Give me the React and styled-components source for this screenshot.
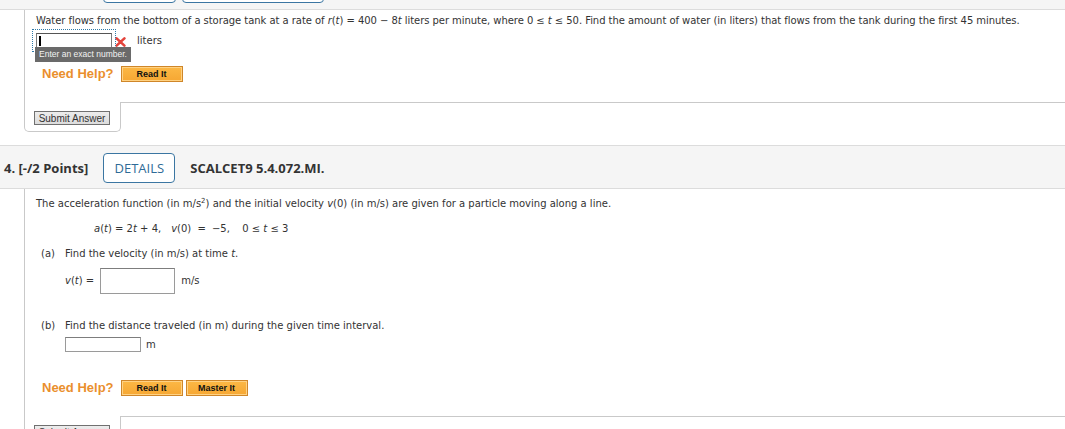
import React from "react"
import styled, { createGlobalStyle } from "styled-components"

const GlobalStyle = createGlobalStyle`
  html, body {
    margin: 0;
    padding: 0;
    background: #fff;
  }
  body {
    font-family: "DejaVu Sans", Verdana, sans-serif;
    color: #333;
  }
`

function XMark() {
  return (
    <svg width="11" height="10" viewBox="0 0 11 10">
      <path
        d="M1.6 1.4 L9.4 8.6 M9.4 1.4 L1.6 8.6"
        stroke="#e3433b"
        strokeWidth="2.6"
        strokeLinecap="round"
      />
    </svg>
  )
}

function HelpButtons({ master, top }) {
  return (
    <HelpRow $top={top}>
      <NeedHelp>Need Help?</NeedHelp>
      <HelpButton>Read It</HelpButton>
      {master && <HelpButton>Master It</HelpButton>}
    </HelpRow>
  )
}

function SubmitFooter() {
  return (
    <Footer>
      <SubmitTab>
        <SubmitButton>Submit Answer</SubmitButton>
      </SubmitTab>
      <FooterLine />
    </Footer>
  )
}

export default function App() {
  return (
    <Page>
      <GlobalStyle />
      {/* bottom edge of the previous question's header, scrolled almost out of view */}
      <PrevHeader>
        <PointsSlot />
        <ButtonGroup>
          <HeaderButton $width={73} />
          <HeaderButton $width={142} />
        </ButtonGroup>
      </PrevHeader>

      <QuestionBody>
        <Prompt $tight>
          Water flows from the bottom of a storage tank at a rate of <i>r</i>(<i>t</i>) = 400 − 8<i>t</i> liters per
          minute, where 0 ≤ <i>t</i> ≤ 50. Find the amount of water (in liters) that flows from the tank during the
          first 45 minutes.
        </Prompt>
        <AnswerRow $indent={0} $top={5}>
          <FocusWrap>
            <AnswerBox $width={76} $height={15}>
              <Caret />
            </AnswerBox>
            <Tooltip>Enter an exact number.</Tooltip>
          </FocusWrap>
          <MarkSlot>
            <XMark />
          </MarkSlot>
          <Unit $gap={11}>liters</Unit>
        </AnswerRow>
        <HelpButtons top={18} />
      </QuestionBody>
      <SubmitFooter />

      <Header>
        <Points>4. [-/2 Points]</Points>
        <HeaderButton>DETAILS</HeaderButton>
        <Code>SCALCET9 5.4.072.MI.</Code>
      </Header>

      <QuestionBody $top={8}>
        <Prompt>
          The acceleration function (in m/s<sup>2</sup>) and the initial velocity <i>v</i>(0) (in m/s) are given for
          a particle moving along a line.
        </Prompt>
        <Equation>
          <MathPart>
            <i>a</i>(<i>t</i>) = 2<i>t</i> + 4,
          </MathPart>
          <MathPart $wide>
            <i>v</i>(0) = −5,
          </MathPart>
          <MathPart>
            0 ≤ <i>t</i> ≤ 3
          </MathPart>
        </Equation>

        <PartLine>
          <PartLabel>(a)</PartLabel>
          <span>
            Find the velocity (in m/s) at time <i>t</i>.
          </span>
        </PartLine>
        <AnswerRow $indent={29} $top={7}>
          <Lead>
            <i>v</i>(<i>t</i>) =
          </Lead>
          <AnswerInput $width={75} $height={26} />
          <Unit $gap={6}>m/s</Unit>
        </AnswerRow>

        <PartLine $top={25}>
          <PartLabel>(b)</PartLabel>
          <span>Find the distance traveled (in m) during the given time interval.</span>
        </PartLine>
        <AnswerRow $indent={29} $top={4}>
          <AnswerInput $width={76} $height={15} />
          <Unit $gap={5}>m</Unit>
        </AnswerRow>

        <HelpButtons master top={28} />
      </QuestionBody>
      <SubmitFooter />
    </Page>
  )
}

const Page = styled.div`
  width: 1065px;
  height: 429px;
  overflow: hidden;
`

const HeaderBase = styled.div`
  display: flex;
  gap: 15px;
  background: #f5f5f5;
  border-bottom: 1px solid #dcdcdc;
  padding: 0 4px;
  font-family: "Open Sans", "DejaVu Sans", sans-serif;
  font-size: 13px;
  color: #333;
`

const PrevHeader = styled(HeaderBase)`
  box-sizing: border-box;
  height: 10px;
  overflow: hidden;
  align-items: flex-end;
  padding-bottom: 6px;
`

const Header = styled(HeaderBase)`
  align-items: center;
  margin-top: 13px;
  border-top: 1px solid #dcdcdc;
  padding-top: 7px;
  padding-bottom: 5px;
`

const PointsSlot = styled.span`
  width: 84px;
  flex-shrink: 0;
`

const ButtonGroup = styled.div`
  display: flex;
  gap: 6px;
  flex-shrink: 0;
`

const Points = styled.span`
  font-weight: 700;
  white-space: nowrap;
  flex-shrink: 0;
`

const HeaderButton = styled.span`
  display: inline-flex;
  align-items: center;
  justify-content: center;
  box-sizing: border-box;
  height: 30px;
  width: ${(p) => p.$width || 72}px;
  flex-shrink: 0;
  border: 1px solid #3b76a2;
  border-radius: 4px;
  background: #fff;
  color: #2f6b97;
  font-size: 13px;
  white-space: nowrap;
`

const Code = styled.span`
  font-weight: 700;
  white-space: nowrap;
`

const QuestionBody = styled.div`
  margin-left: 24px;
  border-left: 1px solid #c9c9c9;
  padding: ${(p) => p.$top || 4}px 0 20px 11px;
  font-size: 10px;
  line-height: 14px;
`

const Prompt = styled.div`
  white-space: nowrap;
  letter-spacing: ${(p) => (p.$tight ? "-0.05px" : "0")};

  sup {
    font-size: 7px;
    line-height: 0;
    vertical-align: 4px;
  }
`

const Equation = styled.div`
  display: flex;
  gap: 10px;
  margin: 11px 0 0 58px;
  white-space: nowrap;
`

const MathPart = styled.span`
  word-spacing: ${(p) => (p.$wide ? "3px" : "0")};
  min-width: ${(p) => (p.$wide ? "61px" : "0")};
`

const PartLine = styled.div`
  display: flex;
  margin-top: ${(p) => p.$top || 11}px;
  padding-left: 5px;
  white-space: nowrap;
`

const PartLabel = styled.span`
  width: 24px;
`

const AnswerRow = styled.div`
  display: flex;
  align-items: center;
  margin-top: ${(p) => p.$top}px;
  padding-left: ${(p) => p.$indent}px;
`

const Lead = styled.span`
  margin-right: 6px;
  white-space: nowrap;
`

const FocusWrap = styled.span`
  position: relative;
  display: inline-flex;
  outline: 1px dotted #2f7aa8;
  outline-offset: 3px;
`

const AnswerBox = styled.span`
  display: inline-flex;
  align-items: center;
  box-sizing: border-box;
  width: ${(p) => p.$width}px;
  height: ${(p) => p.$height}px;
  border: 1px solid #7a7a7a;
  border-top-color: #555;
  background: #fff;
  padding-left: 2px;
`

const Caret = styled.span`
  width: 1px;
  height: 10px;
  background: #000;
  border-left: 1px solid #000;
`

const AnswerInput = styled.input`
  box-sizing: border-box;
  width: ${(p) => p.$width}px;
  height: ${(p) => p.$height}px;
  margin: 0;
  padding: 0;
  border: 1px solid #9a9a9a;
  border-top-color: #7d7d7d;
  background: #fff;
`

const Tooltip = styled.span`
  position: absolute;
  left: -1px;
  top: 14px;
  padding: 0 4px;
  height: 15px;
  line-height: 15px;
  background: #6a6a6a;
  color: #f2f2f2;
  font-family: "Liberation Sans", Arial, sans-serif;
  font-size: 8.5px;
  white-space: nowrap;
`

const MarkSlot = styled.span`
  display: inline-flex;
  margin-left: 3px;
  margin-top: 2px;
`

const Unit = styled.span`
  margin-left: ${(p) => p.$gap}px;
`

const HelpRow = styled.div`
  display: flex;
  align-items: center;
  margin-top: ${(p) => p.$top}px;
  padding-left: 6px;
  height: 16px;
`

const NeedHelp = styled.span`
  font-family: "Liberation Sans", Arial, sans-serif;
  font-weight: 700;
  font-size: 13px;
  color: #ea8f2d;
  margin-right: 7px;
  white-space: nowrap;
`

const HelpButton = styled.span`
  display: inline-flex;
  align-items: center;
  justify-content: center;
  box-sizing: border-box;
  width: 62px;
  height: 16px;
  margin-right: 3px;
  border: 1px solid #cf8629;
  box-shadow: inset 0 0 0 1px #ffd283;
  background: linear-gradient(#fcb845, #f6a733);
  font-family: "Liberation Sans", Arial, sans-serif;
  font-weight: 700;
  font-size: 9px;
  color: #111;
`

const Footer = styled.div`
  display: flex;
  margin-left: 24px;
`

const SubmitTab = styled.div`
  display: flex;
  align-items: flex-start;
  box-sizing: border-box;
  width: 97px;
  height: 30px;
  padding: 9px 0 0 9px;
  border: 1px solid #c9c9c9;
  border-top: none;
  border-radius: 0 0 5px 5px;
`

const FooterLine = styled.div`
  flex: 1;
  border-top: 1px solid #c9c9c9;
`

const SubmitButton = styled.span`
  display: inline-flex;
  align-items: center;
  justify-content: center;
  box-sizing: border-box;
  width: 76px;
  height: 14px;
  border: 1px solid #707070;
  background: linear-gradient(#ececec, #dcdcdc);
  font-family: "Liberation Sans", Arial, sans-serif;
  font-size: 10px;
  color: #333;
  white-space: nowrap;
`
